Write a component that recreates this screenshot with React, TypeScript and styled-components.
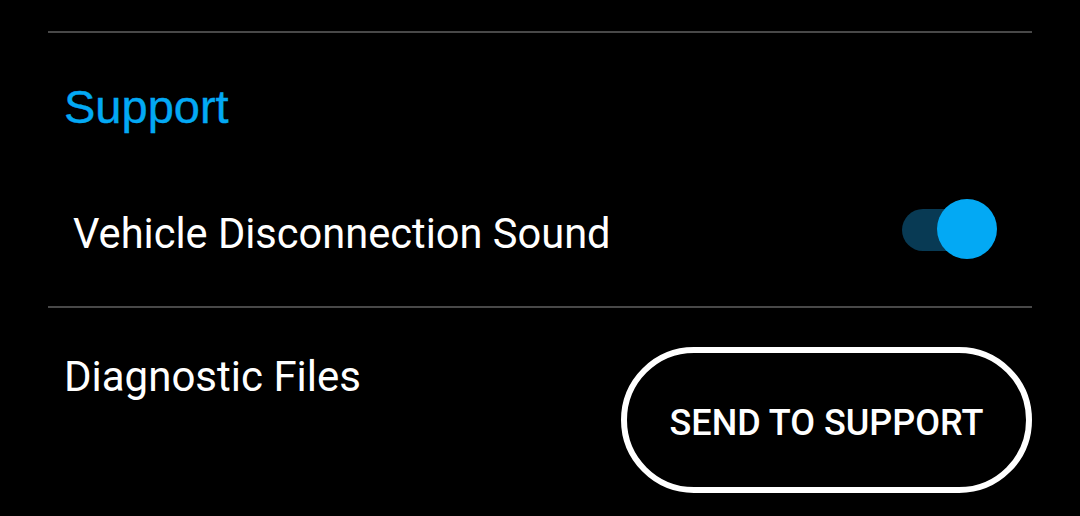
import React, { useState } from 'react';
import styled, { createGlobalStyle } from 'styled-components';

const GlobalStyle = createGlobalStyle`
  html, body {
    margin: 0;
    padding: 0;
    background: #000000;
  }
  body {
    font-family: Roboto, "Liberation Sans", sans-serif;
    color: #ffffff;
  }
`;

const Screen = styled.div`
  width: 1080px;
  height: 516px;
  overflow: hidden;
  background: #000000;
  box-sizing: border-box;
  padding: 31px 48px 0;
`;

const Divider = styled.div`
  height: 2px;
  background-color: #484848;
`;

const SectionTitle = styled.h2`
  margin: 47px 0 0;
  padding-left: 16px;
  font-family: "Liberation Sans", Arial, sans-serif;
  font-weight: 400;
  font-size: 47px;
  line-height: 53px;
  color: #03a9f4;
  -webkit-text-stroke: 0.4px #03a9f4;
`;

const Row = styled.div<{ $align?: string }>`
  display: flex;
  justify-content: space-between;
  align-items: ${(p) => p.$align || 'center'};
`;

const ToggleRow = styled(Row)`
  margin: 66px 0 47px;
  height: 60px;
  padding-left: 25px;
  padding-right: 35px;
`;

const Label = styled.span`
  font-family: Roboto, sans-serif;
  font-size: 42px;
  line-height: 50px;
  color: #ffffff;
`;

const SoundLabel = styled(Label)`
  margin-top: 9px;
  font-size: 41.6px;
`;

const FilesLabel = styled(Label)`
  margin-top: 44px;
  padding-left: 16px;
`;

const SwitchTrack = styled.button<{ $on: boolean }>`
  position: relative;
  width: 95px;
  height: 60px;
  padding: 0;
  border: none;
  background: transparent;
  cursor: pointer;

  &::before {
    content: '';
    position: absolute;
    left: 0;
    top: 10px;
    width: 74px;
    height: 42px;
    border-radius: 21px;
    background-color: ${(p) => (p.$on ? '#083a54' : '#3a3a3a')};
  }
`;

const SwitchThumb = styled.span<{ $on: boolean }>`
  position: absolute;
  top: 0;
  left: ${(p) => (p.$on ? '35px' : '0')};
  width: 60px;
  height: 60px;
  border-radius: 50%;
  background-color: ${(p) => (p.$on ? '#03a9f4' : '#bdbdbd')};
`;

const OutlineButton = styled.button`
  margin-top: 39px;
  width: 411px;
  height: 146px;
  box-sizing: border-box;
  padding: 6px 0 0;
  border: 6px solid #ffffff;
  border-radius: 73px;
  background: transparent;
  color: #ffffff;
  font-family: Roboto, sans-serif;
  font-weight: 500;
  font-size: 36px;
  text-transform: uppercase;
  cursor: pointer;
`;

export default function App() {
  const [sound, setSound] = useState(true);

  return (
    <>
      <GlobalStyle />
      <Screen>
        <Divider />
        <SectionTitle>Support</SectionTitle>
        <ToggleRow>
          <SoundLabel>Vehicle Disconnection Sound</SoundLabel>
          <SwitchTrack $on={sound} onClick={() => setSound(!sound)} aria-label="Vehicle Disconnection Sound">
            <SwitchThumb $on={sound} />
          </SwitchTrack>
        </ToggleRow>
        <Divider />
        <Row $align="flex-start">
          <FilesLabel>Diagnostic Files</FilesLabel>
          <OutlineButton>Send to Support</OutlineButton>
        </Row>
      </Screen>
    </>
  );
}
